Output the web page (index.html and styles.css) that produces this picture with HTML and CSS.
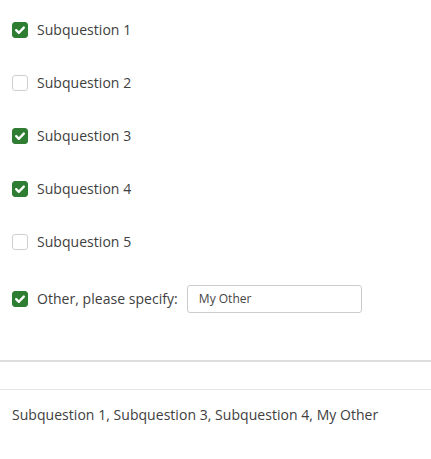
FILE: index.html
```html
<!DOCTYPE html>
<html>
<head>
<meta charset="utf-8">
<link rel="stylesheet" href="styles.css">
</head>
<body>
<div class="question">
  <div class="options">
    <label class="option"><span class="box checked"><svg viewBox="0 0 16 16" width="16" height="16"><path d="M4.2 8.2 L6.9 10.8 L11.8 5.6" fill="none" stroke="#fff" stroke-width="2.4" stroke-linecap="round" stroke-linejoin="round"/></svg></span><span class="label">Subquestion 1</span></label>
    <label class="option"><span class="box"></span><span class="label">Subquestion 2</span></label>
    <label class="option"><span class="box checked"><svg viewBox="0 0 16 16" width="16" height="16"><path d="M4.2 8.2 L6.9 10.8 L11.8 5.6" fill="none" stroke="#fff" stroke-width="2.4" stroke-linecap="round" stroke-linejoin="round"/></svg></span><span class="label">Subquestion 3</span></label>
    <label class="option"><span class="box checked"><svg viewBox="0 0 16 16" width="16" height="16"><path d="M4.2 8.2 L6.9 10.8 L11.8 5.6" fill="none" stroke="#fff" stroke-width="2.4" stroke-linecap="round" stroke-linejoin="round"/></svg></span><span class="label">Subquestion 4</span></label>
    <label class="option"><span class="box"></span><span class="label">Subquestion 5</span></label>
    <label class="option other"><span class="box checked"><svg viewBox="0 0 16 16" width="16" height="16"><path d="M4.2 8.2 L6.9 10.8 L11.8 5.6" fill="none" stroke="#fff" stroke-width="2.4" stroke-linecap="round" stroke-linejoin="round"/></svg></span><span class="label">Other, please specify:</span><span class="input">My Other</span></label>
  </div>
</div>
<div class="divider-thick"></div>
<div class="spacer"></div>
<div class="result">Subquestion 1, Subquestion 3, Subquestion 4, My Other</div>
</body>
</html>
```
FILE: styles.css
```css
html, body {
  margin: 0;
  padding: 0;
  background: #fff;
  font-family: "Open Sans", "Liberation Sans", sans-serif;
  color: #404040;
  font-size: 14px;
  letter-spacing: 0.04px;
}
.question {
  padding: 20px 12px 47px 12px;
}
.options {
  display: flex;
  flex-direction: column;
  gap: 33px;
}
.option {
  display: flex;
  align-items: center;
  height: 20px;
  line-height: 20px;
}
.option.other {
  height: 28px;
}
.box {
  width: 16px;
  height: 16px;
  box-sizing: border-box;
  border: 1px solid #cfcfcf;
  border-radius: 3px;
  background: #fff;
  margin-right: 9px;
  flex: none;
  display: flex;
  align-items: center;
  justify-content: center;
}
.box.checked {
  background: #2e7d32;
  border-color: #2e7d32;
}
.box svg {
  display: block;
  margin: -1px;
}
.label {
  white-space: nowrap;
}
.input {
  margin-left: 9px;
  box-sizing: border-box;
  width: 175px;
  height: 28px;
  border: 1px solid #cccccc;
  border-radius: 3px;
  padding: 0 11px;
  font-size: 12px;
  line-height: 26px;
  color: #444;
  letter-spacing: 0;
}
.divider-thick {
  height: 2px;
  background: #dddddd;
}
.spacer {
  height: 27px;
  border-bottom: 1px solid #e5e5e5;
}
.result {
  padding: 15px 12px;
  line-height: 20px;
}
```
